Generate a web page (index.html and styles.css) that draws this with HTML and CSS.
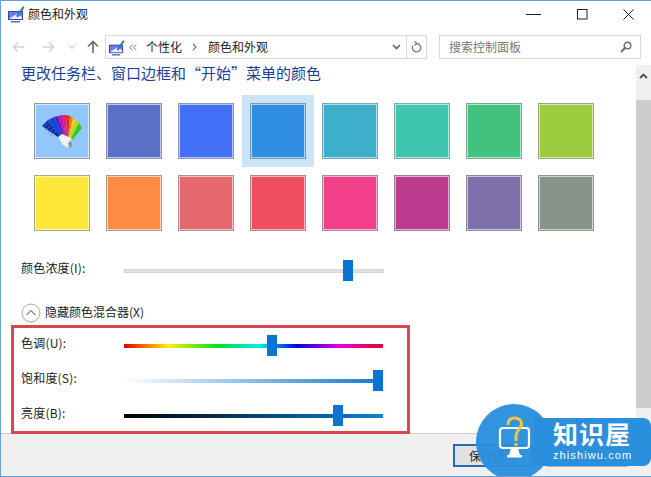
FILE: index.html
```html
<!DOCTYPE html>
<html lang="zh-CN">
<head>
<meta charset="utf-8">
<title>颜色和外观</title>
<link rel="stylesheet" href="styles.css">
</head>
<body>
<div class="window">
  <header class="titlebar">
    <svg class="app-icon" width="18" height="18" viewBox="0 0 18 18"><rect x="1" y="6" width="15" height="9" fill="#3a3fc8"/><rect x="2" y="7" width="13" height="7" fill="#6d7be8"/><path d="M3 13 L10 9 L15 12 V14 H3Z" fill="#e8f0ff"/><rect x="4" y="16" width="9" height="1.5" fill="#4a78a8"/><path d="M9 11 L16 1 L17.5 2.5 L11 12.5Z" fill="#2f7fa8"/></svg>
    <span class="title">颜色和外观</span>
    <div class="controls">
      <svg width="16" height="12" viewBox="0 0 16 12"><path d="M0 6.5H15" stroke="#222"/></svg>
      <svg width="11" height="11" viewBox="0 0 11 11"><rect x=".5" y=".5" width="9.5" height="9.5" fill="none" stroke="#222"/></svg>
      <svg width="11" height="11" viewBox="0 0 11 11"><path d="M.5 .5L10.5 10.5M10.5 .5L.5 10.5" stroke="#222" fill="none"/></svg>
    </div>
  </header>
  <nav class="nav">
    <div class="nav-buttons">
      <svg width="13" height="12" viewBox="0 0 13 12"><path d="M12.5 6H1.5M6 1.5L1.5 6L6 10.5" stroke="#d4d4d4" stroke-width="1.6" fill="none"/></svg>
      <svg width="13" height="12" viewBox="0 0 13 12"><path d="M.5 6H11.5M7 1.5L11.5 6L7 10.5" stroke="#d4d4d4" stroke-width="1.6" fill="none"/></svg>
      <svg width="8" height="6" viewBox="0 0 8 6"><path d="M1 1L4 4.5L7 1" stroke="#d4d4d4" stroke-width="1.3" fill="none"/></svg>
      <svg width="12" height="13" viewBox="0 0 12 13"><path d="M6 13V1.5M1 6.5L6 1.5L11 6.5" stroke="#6d6d6d" stroke-width="1.7" fill="none"/></svg>
    </div>
    <div class="address">
      <svg class="addr-icon" width="17" height="17" viewBox="0 0 18 18"><rect x="1" y="6" width="15" height="9" fill="#3a3fc8"/><rect x="2" y="7" width="13" height="7" fill="#6d7be8"/><path d="M3 13 L10 9 L15 12 V14 H3Z" fill="#e8f0ff"/><rect x="4" y="16" width="9" height="1.5" fill="#4a78a8"/><path d="M9 11 L16 1 L17.5 2.5 L11 12.5Z" fill="#2f7fa8"/></svg>
      <svg class="crumb-more" width="8" height="7" viewBox="0 0 8 7"><path d="M3.500 .5L.8 3.500L3.500 6.500M7.200 .5L4.500 3.500L7.200 6.500" stroke="#777" fill="none"/></svg>
      <span class="crumb">个性化</span>
      <svg class="crumb-sep" width="5" height="8" viewBox="0 0 5 8"><path d="M1 1L4 4L1 7" stroke="#777" stroke-width="1.2" fill="none"/></svg>
      <span class="crumb">颜色和外观</span>
      <svg class="addr-drop" width="9" height="6" viewBox="0 0 9 6"><path d="M1 1L4.500 4.500L8 1" stroke="#666" stroke-width="1.6" fill="none"/></svg>
      <span class="addr-refresh">
        <svg width="11" height="12" viewBox="0 0 11 12"><path d="M5.500 2.500A4.200 4.200 0 1 1 1.800 4.800M3.500 .5L5.800 2.500L3.500 4.500" stroke="#777" stroke-width="1.3" fill="none"/></svg>
      </span>
    </div>
    <div class="search">
      <span class="search-text">搜索控制面板</span>
      <svg width="12" height="12" viewBox="0 0 12 12"><circle cx="7.500" cy="4.500" r="3.300" stroke="#6d6d6d" stroke-width="1.400" fill="none"/><path d="M5 7L1 11" stroke="#6d6d6d" stroke-width="1.800"/></svg>
    </div>
  </nav>
  <div class="body">
    <main class="content">
      <h1 class="heading">更改任务栏、窗口边框和“开始”菜单的颜色</h1>
      <div class="swatches">
        <div class="swatch s-custom">
          <svg width="40" height="33" viewBox="0 0 40 33">
            <path d="M0 11L6 5L20 24L16 22Z" fill="#0c2a9c"/>
            <path d="M6 5L12 2L22 23L20 24Z" fill="#1446d8"/>
            <path d="M12 2L16 1L23 23L22 23Z" fill="#5a1cc4"/>
            <path d="M16 1L20 0L24 22L23 23Z" fill="#c414b8"/>
            <path d="M20 0L24 0L25 22L24 22Z" fill="#e81c78"/>
            <path d="M24 0L28 1L26 22L25 22Z" fill="#e8281c"/>
            <path d="M28 1L31 3L27 22L26 22Z" fill="#f08010"/>
            <path d="M31 3L34 5L28 23L27 22Z" fill="#f4d010"/>
            <path d="M34 5L37 8L29 24L28 23Z" fill="#a8e020"/>
            <path d="M37 8L40 13L30 25L29 24Z" fill="#30c828"/>
            <path d="M1.500 12L8 7M3.500 15L10 10M6 18L12 13M8 21L14 16" stroke="#4878e8" stroke-width=".8"/>
            <path d="M16 22L20 19L29 23L31 32L27 33L21 30Z" fill="#f2f3f6"/>
            <path d="M27 33L31 32L29 25L26 28Z" fill="#8f97a8"/>
          </svg>
        </div>
        <div class="swatch s2"></div>
        <div class="swatch s3"></div>
        <div class="swatch s4 selected"></div>
        <div class="swatch s5"></div>
        <div class="swatch s6"></div>
        <div class="swatch s7"></div>
        <div class="swatch s8"></div>
        <div class="swatch s9"></div>
        <div class="swatch s10"></div>
        <div class="swatch s11"></div>
        <div class="swatch s12"></div>
        <div class="swatch s13"></div>
        <div class="swatch s14"></div>
        <div class="swatch s15"></div>
        <div class="swatch s16"></div>
      </div>
      <div class="row row-intensity">
        <span class="label">颜色浓度(I):</span>
        <div class="slider"><div class="track t-gray"></div><span class="thumb" style="left:219px"></span></div>
      </div>
      <div class="toggle">
        <svg width="20" height="20" viewBox="0 0 20 20"><circle cx="10" cy="10" r="9" fill="none" stroke="#a8a8a8"/><path d="M5.500 12L10 7.500L14.500 12" fill="none" stroke="#8a8a8a" stroke-width="1.200"/></svg>
        <span class="toggle-text">隐藏颜色混合器(X)</span>
      </div>
      <div class="mixer">
        <div class="row">
          <span class="label">色调(U):</span>
          <div class="slider"><div class="track t-hue"></div><span class="thumb" style="left:143px"></span></div>
        </div>
        <div class="row">
          <span class="label">饱和度(S):</span>
          <div class="slider"><div class="track t-sat"></div><span class="thumb" style="left:249px"></span></div>
        </div>
        <div class="row">
          <span class="label">亮度(B):</span>
          <div class="slider"><div class="track t-bri"></div><span class="thumb" style="left:209px"></span></div>
        </div>
      </div>
    </main>
    <div class="scrollbar">
      <div class="scroll-up"><svg width="9" height="6" viewBox="0 0 9 6"><path d="M1 5L4.500 1.500L8 5" stroke="#505050" stroke-width="1.800" fill="none"/></svg></div>
      <div class="scroll-thumb"></div>
    </div>
  </div>
  <footer class="footer">
    <button class="btn btn-primary">保存修改</button>
    <button class="btn" aria-label="取消"></button>
  </footer>
  <div class="annotation"></div>
  <div class="watermark">
    <div class="wm-circle">
      <svg width="38" height="48" viewBox="0 0 38 48">
        <rect x="5" y="12" width="29" height="20" rx="3" fill="none" stroke="#fff" stroke-width="2.200"/>
        <path d="M16 32H23L25 39H14Z" fill="#fff"/>
        <rect x="12" y="39" width="15" height="2.500" fill="#fff"/>
        <path d="M13 9C13 4 16 2 19.500 2C24 2 26.500 4.500 26.500 8C26.500 13 21 14 21 20V25" fill="none" stroke="#f4c63a" stroke-width="3"/>
        <circle cx="21" cy="28.500" r="1.800" fill="#f4c63a"/>
      </svg>
    </div>
    <div class="wm-text">
      <span class="wm-name">知识屋</span>
      <span class="wm-url">zhishiwu.com</span>
    </div>
  </div>
</div>
</body>
</html>
```
FILE: styles.css
```css
* { box-sizing: border-box; }
html, body { margin: 0; padding: 0; }
body {
  width: 651px;
  height: 477px;
  overflow: hidden;
  background: #fff;
  font-family: "Noto Sans CJK SC", "Liberation Sans", sans-serif;
  font-size: 12px;
  color: #222;
}
.window {
  position: relative;
  width: 651px;
  height: 477px;
  border: 1px solid #6a9fd6;
  border-right-width: 0;
  display: flex;
  flex-direction: column;
  overflow: hidden;
}
.titlebar {
  height: 30px;
  display: flex;
  align-items: center;
  padding: 0 17px 4px 6px;
  flex: none;
}
.app-icon { margin-right: 3px; }
.title { font-size: 12px; line-height: 16px; }
.controls {
  margin-left: auto;
  display: flex;
  align-items: center;
  gap: 35px;
}
.nav {
  height: 33px;
  flex: none;
  display: flex;
  align-items: flex-start;
  padding-top: 4px;
}
.nav-buttons {
  width: 104px;
  height: 23px;
  display: flex;
  align-items: center;
  padding-left: 11px;
}
.nav-buttons svg:nth-child(1) { margin-right: 17px; }
.nav-buttons svg:nth-child(2) { margin-right: 13px; }
.nav-buttons svg:nth-child(3) { margin-right: 11px; }
.address {
  width: 322px;
  height: 24px;
  border: 1px solid #d9d9d9;
  display: flex;
  align-items: center;
  padding-left: 2px;
}
.crumb-more { margin: 0 9px 0 4px; }
.crumb-sep { margin: 0 11px 0 10px; }
.crumb { line-height: 16px; }
.addr-drop { margin-left: auto; margin-right: 5px; }
.addr-refresh {
  width: 20px;
  height: 22px;
  border-left: 1px solid #d9d9d9;
  display: flex;
  align-items: center;
  justify-content: center;
}
.search {
  width: 202px;
  height: 24px;
  margin-left: 12px;
  border: 1px solid #d9d9d9;
  display: flex;
  align-items: center;
  justify-content: space-between;
  padding: 0 8px 0 9px;
}
.search-text { color: #777; line-height: 16px; }
.body {
  flex: 1;
  display: flex;
  min-height: 0;
}
.content {
  flex: 1;
  padding-left: 20px;
}
.heading {
  margin: -1px 0 0;
  font-size: 15px;
  font-weight: 400;
  line-height: 20px;
  color: #1c3f94;
  white-space: nowrap;
}
.swatches {
  margin: 20px 0 0 13px;
  display: grid;
  grid-template-columns: repeat(8, 56px);
  grid-auto-rows: 56px;
  gap: 16px;
}
.swatch {
  border: 1px solid #8f9ba6;
  box-shadow: inset 0 0 0 1px rgba(255, 255, 255, .6);
}
.s-custom {
  background: #93c6fa;
  display: flex;
  align-items: center;
  justify-content: center;
}
.s2 { background: #5a6fc8; border-color: #8d93a8; }
.s3 { background: #4270f6; border-color: #8f9bb0; }
.s4 { background: #2f8ee0; border-color: #7f9cb0; }
.s5 { background: #3eafcb; border-color: #7fa4ae; }
.s6 { background: #40c5ae; border-color: #86aca4; }
.s7 { background: #43c27f; border-color: #84a692; }
.s8 { background: #9ccb3d; border-color: #9aa68a; }
.s9 { background: #ffe83a; border-color: #a8a78c; }
.s10 { background: #ff8c45; border-color: #a89c90; }
.s11 { background: #e5696e; border-color: #a69496; }
.s12 { background: #f04d5e; border-color: #a68c92; }
.s13 { background: #f23f8a; border-color: #a68a9c; }
.s14 { background: #bc3b8f; border-color: #988098; }
.s15 { background: #8070aa; border-color: #90899e; }
.s16 { background: #88948a; border-color: #8f9690; }
.selected { outline: 8px solid #cce4f7; }
.row {
  display: flex;
  align-items: flex-start;
  height: 21px;
}
.row + .row { margin-top: 14px; }
.row-intensity { margin-top: 29px; }
.label {
  width: 103px;
  flex: none;
  line-height: 16px;
  letter-spacing: .2px;
}
.slider {
  position: relative;
  width: 260px;
  height: 21px;
}
.track {
  height: 4px;
  margin-top: 9px;
}
.t-gray { background: #e0e0e0; border: 1px solid #d6d6d6; }
.t-hue {
  width: 259px;
  background: linear-gradient(90deg, #e60000 0%, #ffee00 17%, #00e020 36%, #00f0f0 52%, #0000e0 67%, #e800e0 83%, #e00030 100%);
}
.t-sat { width: 259px; background: linear-gradient(90deg, #fff 0%, #0e7ad0 100%); }
.t-bri { width: 259px; background: linear-gradient(90deg, #000 0%, #1080d8 100%); }
.thumb {
  position: absolute;
  top: 0;
  width: 10px;
  height: 21px;
  background: #0a74d0;
}
.toggle {
  margin-top: 22px;
  height: 20px;
  margin-bottom: 12px;
  display: flex;
  align-items: center;
  gap: 4px;
}
.toggle-text { line-height: 16px; margin-top: -2px; }
.scrollbar {
  width: 15px;
  flex: none;
  margin-top: 1px;
  background: #f0f0f0;
  display: flex;
  flex-direction: column;
}
.scroll-up {
  height: 35px;
  padding-top: 8px;
  display: flex;
  justify-content: center;
  align-items: flex-start;
}
.scroll-thumb {
  height: 308px;
  background: #cdcdcd;
}
.footer {
  height: 43px;
  flex: none;
  background: #f0f0f0;
  border-top: 1px solid #cccccc;
  display: flex;
  align-items: flex-start;
  gap: 14px;
  padding: 10px 0 0 452px;
}
.btn {
  width: 80px;
  height: 23px;
  border: 1px solid #adadad;
  background: #e1e1e1;
  font: inherit;
  color: inherit;
  padding: 0;
}
.btn-primary { border: 2px solid #2a6cae; }
.annotation {
  position: absolute;
  left: 10px;
  top: 324px;
  width: 399px;
  height: 109px;
  border: 3px solid #d8464f;
}
.watermark {
  position: absolute;
  left: 475px;
  top: 403px;
  width: 176px;
  height: 74px;
}
.wm-circle {
  position: absolute;
  left: 0;
  top: 0;
  width: 76px;
  height: 76px;
  border-radius: 50%;
  background: rgba(42, 143, 221, .96);
  display: flex;
  align-items: flex-start;
  justify-content: center;
  padding-top: 12px;
  z-index: 1;
}
.wm-text {
  position: absolute;
  left: 58px;
  top: 14px;
  width: 117px;
  height: 48px;
  padding-left: 19px;
  border-radius: 0 8px 8px 0;
  background: #2a8fdd;
  color: #fff;
  display: flex;
  flex-direction: column;
}
.wm-name {
  font-size: 25px;
  font-weight: 700;
  line-height: 31px;
  letter-spacing: 1px;
  white-space: nowrap;
}
.wm-url {
  font-family: "Liberation Sans", sans-serif;
  font-size: 11px;
  line-height: 12px;
  letter-spacing: 1.100px;
  white-space: nowrap;
}
```
